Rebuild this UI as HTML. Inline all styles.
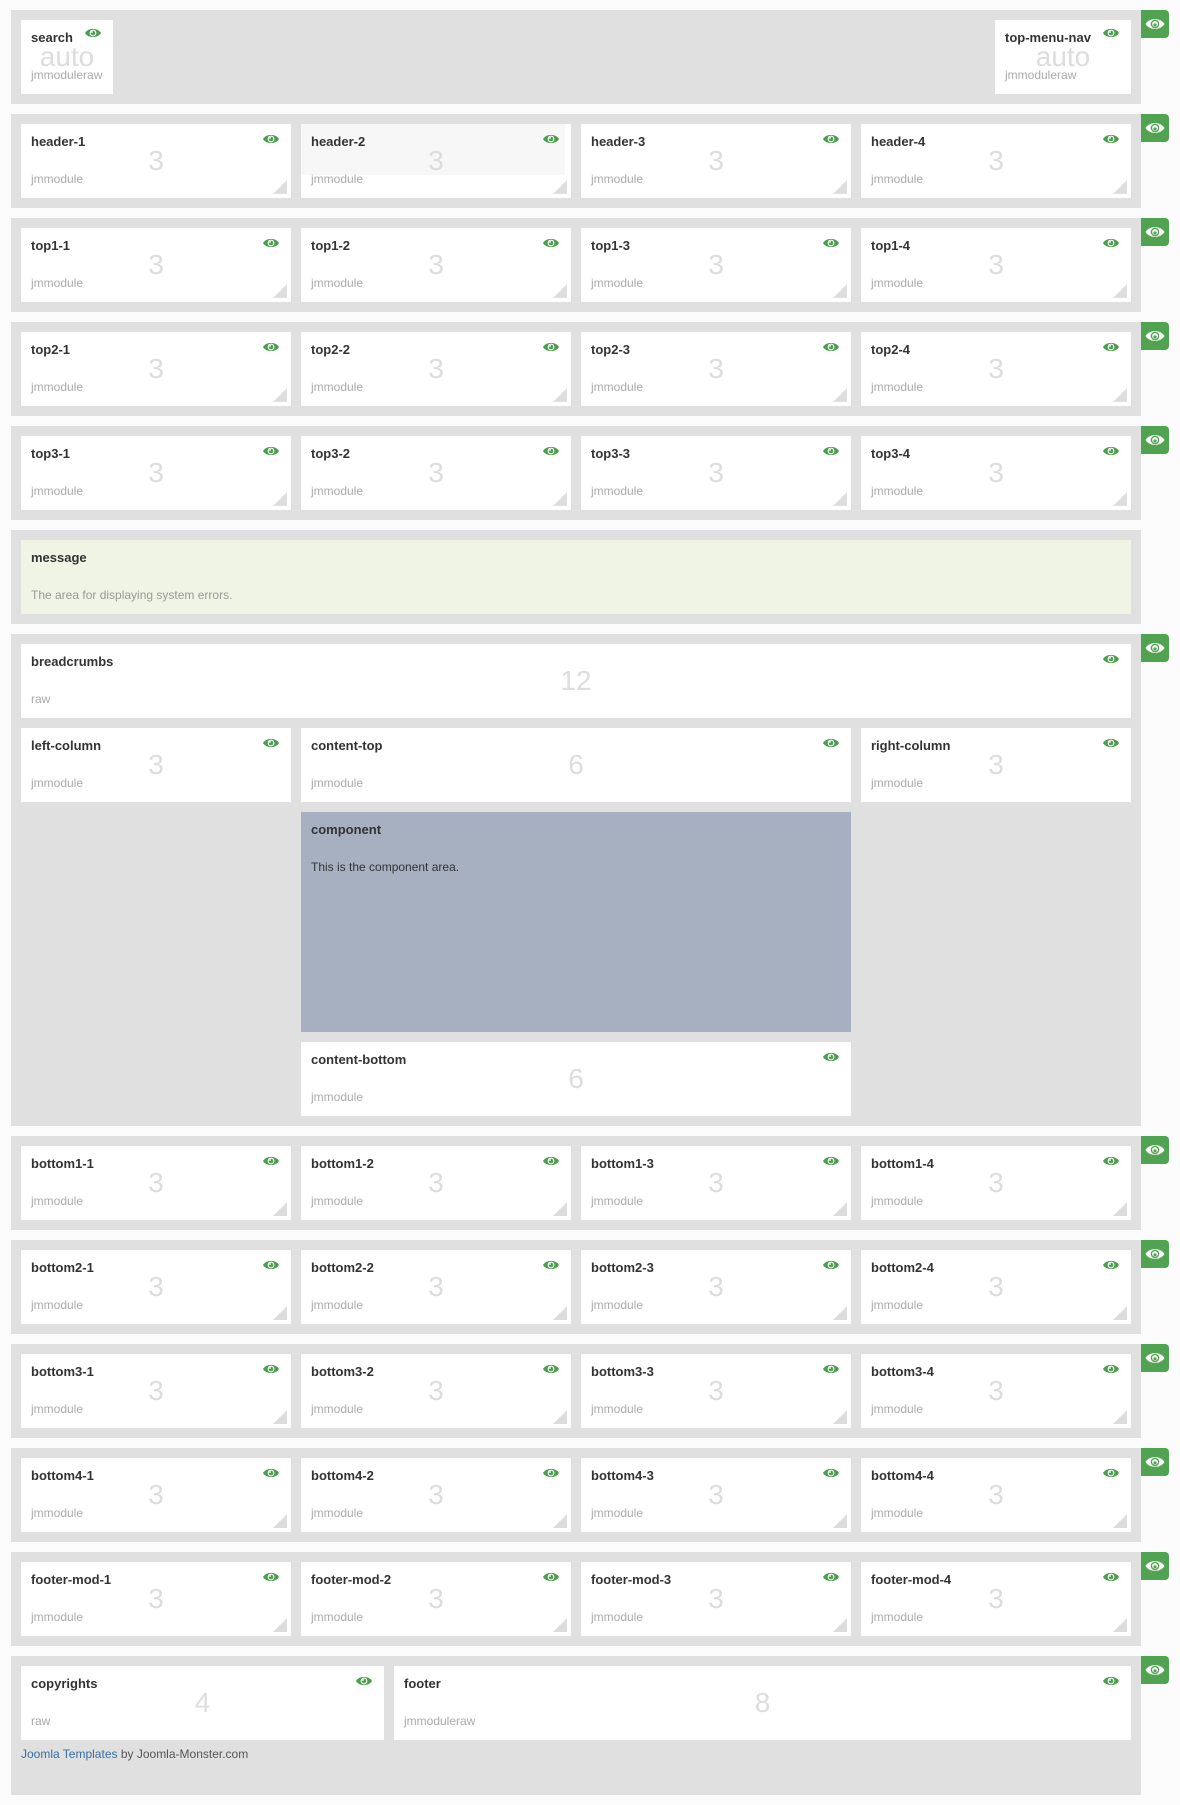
<!DOCTYPE html>
<html><head><meta charset="utf-8"><style>
*{margin:0;padding:0;box-sizing:border-box}
body{width:1180px;height:1805px;background:#fcfcfc;font-family:"Liberation Sans",Arial,sans-serif;position:relative;overflow:hidden}
.s{position:absolute;left:11px;width:1130px;height:94px;background:#e0e0e0}
.g{position:absolute;left:1130px;top:0;width:28px;height:28px;background:#50a451;border-radius:0 4px 4px 0}
.g svg{position:absolute;left:4px;top:7px}
.m{position:absolute;top:10px;width:270px;height:74px;background:#fff}
.m b{position:absolute;left:10px;top:10px;font-size:13px;color:#333;font-weight:bold}
.m .n{position:absolute;left:0;right:0;top:21px;text-align:center;font-size:28px;color:#ddd;font-style:normal;line-height:32px}
.m span{position:absolute;left:10px;top:48px;font-size:12px;color:#aaa}
.m .e{position:absolute;right:12px;top:10px}
.m .t{position:absolute;right:4px;bottom:4px;width:0;height:0;border-left:14px solid transparent;border-bottom:14px solid #ddd}
</style></head><body>

<svg width="0" height="0" style="position:absolute"><defs>
<symbol id="eye" viewBox="0 0 16 10"><path d="M0 5C3 -0.5 13 -0.5 16 5C13 10.5 3 10.5 0 5Z" fill="#4a9e4e"/><circle cx="8" cy="5" r="3.4" fill="#fff"/><circle cx="8" cy="5" r="2.3" fill="#4a9e4e"/><circle cx="7" cy="4" r="0.9" fill="#fff"/></symbol>
<symbol id="weye" viewBox="0 0 20 14"><path d="M0.5 7C4.5 0.5 15.5 0.5 19.5 7C15.5 13.5 4.5 13.5 0.5 7Z" fill="#fff"/><circle cx="10" cy="7" r="4.3" fill="#50a451"/><circle cx="10" cy="7" r="2.9" fill="#fff"/><circle cx="10" cy="7.8" r="1.6" fill="#50a451"/></symbol>
</defs></svg>

<div class="s" style="top:10px">
 <div class="m" style="left:10px;width:92px"><b>search</b><i class="n">auto</i><span>jmmoduleraw</span><svg class="e" style="right:12px;top:8px" width="16" height="10"><use href="#eye"/></svg></div>
 <div class="m" style="left:984px;width:136px"><b>top-menu-nav</b><i class="n">auto</i><span>jmmoduleraw</span><svg class="e" style="right:12px;top:8px" width="16" height="10"><use href="#eye"/></svg></div>
 <div class="g"><svg width="20" height="14"><use href="#weye"/></svg></div>
</div>

<div class="s" style="top:114px">
 <div class="m" style="left:10px"><b>header-1</b><i class="n">3</i><span>jmmodule</span><svg class="e" width="16" height="10"><use href="#eye"/></svg><div class="t"></div></div>
 <div class="m" style="left:290px"><div style="position:absolute;left:0;top:0;width:264px;height:51px;background:#f7f7f7"></div><b>header-2</b><i class="n">3</i><span>jmmodule</span><svg class="e" width="16" height="10"><use href="#eye"/></svg><div class="t"></div></div>
 <div class="m" style="left:570px"><b>header-3</b><i class="n">3</i><span>jmmodule</span><svg class="e" width="16" height="10"><use href="#eye"/></svg><div class="t"></div></div>
 <div class="m" style="left:850px"><b>header-4</b><i class="n">3</i><span>jmmodule</span><svg class="e" width="16" height="10"><use href="#eye"/></svg><div class="t"></div></div>
 <div class="g"><svg width="20" height="14"><use href="#weye"/></svg></div>
</div>

<div class="s" style="top:218px">
 <div class="m" style="left:10px"><b>top1-1</b><i class="n">3</i><span>jmmodule</span><svg class="e" width="16" height="10"><use href="#eye"/></svg><div class="t"></div></div>
 <div class="m" style="left:290px"><b>top1-2</b><i class="n">3</i><span>jmmodule</span><svg class="e" width="16" height="10"><use href="#eye"/></svg><div class="t"></div></div>
 <div class="m" style="left:570px"><b>top1-3</b><i class="n">3</i><span>jmmodule</span><svg class="e" width="16" height="10"><use href="#eye"/></svg><div class="t"></div></div>
 <div class="m" style="left:850px"><b>top1-4</b><i class="n">3</i><span>jmmodule</span><svg class="e" width="16" height="10"><use href="#eye"/></svg><div class="t"></div></div>
 <div class="g"><svg width="20" height="14"><use href="#weye"/></svg></div>
</div>

<div class="s" style="top:322px">
 <div class="m" style="left:10px"><b>top2-1</b><i class="n">3</i><span>jmmodule</span><svg class="e" width="16" height="10"><use href="#eye"/></svg><div class="t"></div></div>
 <div class="m" style="left:290px"><b>top2-2</b><i class="n">3</i><span>jmmodule</span><svg class="e" width="16" height="10"><use href="#eye"/></svg><div class="t"></div></div>
 <div class="m" style="left:570px"><b>top2-3</b><i class="n">3</i><span>jmmodule</span><svg class="e" width="16" height="10"><use href="#eye"/></svg><div class="t"></div></div>
 <div class="m" style="left:850px"><b>top2-4</b><i class="n">3</i><span>jmmodule</span><svg class="e" width="16" height="10"><use href="#eye"/></svg><div class="t"></div></div>
 <div class="g"><svg width="20" height="14"><use href="#weye"/></svg></div>
</div>

<div class="s" style="top:426px">
 <div class="m" style="left:10px"><b>top3-1</b><i class="n">3</i><span>jmmodule</span><svg class="e" width="16" height="10"><use href="#eye"/></svg><div class="t"></div></div>
 <div class="m" style="left:290px"><b>top3-2</b><i class="n">3</i><span>jmmodule</span><svg class="e" width="16" height="10"><use href="#eye"/></svg><div class="t"></div></div>
 <div class="m" style="left:570px"><b>top3-3</b><i class="n">3</i><span>jmmodule</span><svg class="e" width="16" height="10"><use href="#eye"/></svg><div class="t"></div></div>
 <div class="m" style="left:850px"><b>top3-4</b><i class="n">3</i><span>jmmodule</span><svg class="e" width="16" height="10"><use href="#eye"/></svg><div class="t"></div></div>
 <div class="g"><svg width="20" height="14"><use href="#weye"/></svg></div>
</div>

<div class="s" style="top:530px">
 <div class="m" style="left:10px;width:1110px;background:#f0f4e4"><b>message</b><span style="color:#999">The area for displaying system errors.</span></div>
</div>

<div class="s" style="top:634px;height:492px">
 <div class="m" style="left:10px;width:1110px"><b>breadcrumbs</b><i class="n">12</i><span>raw</span><svg class="e" width="16" height="10"><use href="#eye"/></svg></div>
 <div class="m" style="left:10px;top:94px"><b>left-column</b><i class="n">3</i><span>jmmodule</span><svg class="e" width="16" height="10"><use href="#eye"/></svg></div>
 <div class="m" style="left:290px;top:94px;width:550px"><b>content-top</b><i class="n">6</i><span>jmmodule</span><svg class="e" width="16" height="10"><use href="#eye"/></svg></div>
 <div class="m" style="left:850px;top:94px"><b>right-column</b><i class="n">3</i><span>jmmodule</span><svg class="e" width="16" height="10"><use href="#eye"/></svg></div>
 <div class="m" style="left:290px;top:178px;width:550px;height:220px;background:#a7b0c0"><b>component</b><span style="color:#333">This is the component area.</span></div>
 <div class="m" style="left:290px;top:408px;width:550px"><b>content-bottom</b><i class="n">6</i><span>jmmodule</span><svg class="e" width="16" height="10"><use href="#eye"/></svg></div>
 <div class="g"><svg width="20" height="14"><use href="#weye"/></svg></div>
</div>

<div class="s" style="top:1136px">
 <div class="m" style="left:10px"><b>bottom1-1</b><i class="n">3</i><span>jmmodule</span><svg class="e" width="16" height="10"><use href="#eye"/></svg><div class="t"></div></div>
 <div class="m" style="left:290px"><b>bottom1-2</b><i class="n">3</i><span>jmmodule</span><svg class="e" width="16" height="10"><use href="#eye"/></svg><div class="t"></div></div>
 <div class="m" style="left:570px"><b>bottom1-3</b><i class="n">3</i><span>jmmodule</span><svg class="e" width="16" height="10"><use href="#eye"/></svg><div class="t"></div></div>
 <div class="m" style="left:850px"><b>bottom1-4</b><i class="n">3</i><span>jmmodule</span><svg class="e" width="16" height="10"><use href="#eye"/></svg><div class="t"></div></div>
 <div class="g"><svg width="20" height="14"><use href="#weye"/></svg></div>
</div>

<div class="s" style="top:1240px">
 <div class="m" style="left:10px"><b>bottom2-1</b><i class="n">3</i><span>jmmodule</span><svg class="e" width="16" height="10"><use href="#eye"/></svg><div class="t"></div></div>
 <div class="m" style="left:290px"><b>bottom2-2</b><i class="n">3</i><span>jmmodule</span><svg class="e" width="16" height="10"><use href="#eye"/></svg><div class="t"></div></div>
 <div class="m" style="left:570px"><b>bottom2-3</b><i class="n">3</i><span>jmmodule</span><svg class="e" width="16" height="10"><use href="#eye"/></svg><div class="t"></div></div>
 <div class="m" style="left:850px"><b>bottom2-4</b><i class="n">3</i><span>jmmodule</span><svg class="e" width="16" height="10"><use href="#eye"/></svg><div class="t"></div></div>
 <div class="g"><svg width="20" height="14"><use href="#weye"/></svg></div>
</div>

<div class="s" style="top:1344px">
 <div class="m" style="left:10px"><b>bottom3-1</b><i class="n">3</i><span>jmmodule</span><svg class="e" width="16" height="10"><use href="#eye"/></svg><div class="t"></div></div>
 <div class="m" style="left:290px"><b>bottom3-2</b><i class="n">3</i><span>jmmodule</span><svg class="e" width="16" height="10"><use href="#eye"/></svg><div class="t"></div></div>
 <div class="m" style="left:570px"><b>bottom3-3</b><i class="n">3</i><span>jmmodule</span><svg class="e" width="16" height="10"><use href="#eye"/></svg><div class="t"></div></div>
 <div class="m" style="left:850px"><b>bottom3-4</b><i class="n">3</i><span>jmmodule</span><svg class="e" width="16" height="10"><use href="#eye"/></svg><div class="t"></div></div>
 <div class="g"><svg width="20" height="14"><use href="#weye"/></svg></div>
</div>

<div class="s" style="top:1448px">
 <div class="m" style="left:10px"><b>bottom4-1</b><i class="n">3</i><span>jmmodule</span><svg class="e" width="16" height="10"><use href="#eye"/></svg><div class="t"></div></div>
 <div class="m" style="left:290px"><b>bottom4-2</b><i class="n">3</i><span>jmmodule</span><svg class="e" width="16" height="10"><use href="#eye"/></svg><div class="t"></div></div>
 <div class="m" style="left:570px"><b>bottom4-3</b><i class="n">3</i><span>jmmodule</span><svg class="e" width="16" height="10"><use href="#eye"/></svg><div class="t"></div></div>
 <div class="m" style="left:850px"><b>bottom4-4</b><i class="n">3</i><span>jmmodule</span><svg class="e" width="16" height="10"><use href="#eye"/></svg><div class="t"></div></div>
 <div class="g"><svg width="20" height="14"><use href="#weye"/></svg></div>
</div>

<div class="s" style="top:1552px">
 <div class="m" style="left:10px"><b>footer-mod-1</b><i class="n">3</i><span>jmmodule</span><svg class="e" width="16" height="10"><use href="#eye"/></svg><div class="t"></div></div>
 <div class="m" style="left:290px"><b>footer-mod-2</b><i class="n">3</i><span>jmmodule</span><svg class="e" width="16" height="10"><use href="#eye"/></svg><div class="t"></div></div>
 <div class="m" style="left:570px"><b>footer-mod-3</b><i class="n">3</i><span>jmmodule</span><svg class="e" width="16" height="10"><use href="#eye"/></svg><div class="t"></div></div>
 <div class="m" style="left:850px"><b>footer-mod-4</b><i class="n">3</i><span>jmmodule</span><svg class="e" width="16" height="10"><use href="#eye"/></svg><div class="t"></div></div>
 <div class="g"><svg width="20" height="14"><use href="#weye"/></svg></div>
</div>

<div class="s" style="top:1656px;height:139px">
 <div class="m" style="left:10px;width:363px"><b>copyrights</b><i class="n">4</i><span>raw</span><svg class="e" width="16" height="10"><use href="#eye"/></svg></div>
 <div class="m" style="left:383px;width:737px"><b>footer</b><i class="n">8</i><span>jmmoduleraw</span><svg class="e" width="16" height="10"><use href="#eye"/></svg></div>
 <div style="position:absolute;left:10px;top:91px;font-size:12px;color:#555"><span style="color:#3a6ea5">Joomla Templates</span> by Joomla-Monster.com</div>
 <div class="g"><svg width="20" height="14"><use href="#weye"/></svg></div>
</div>

</body></html>
